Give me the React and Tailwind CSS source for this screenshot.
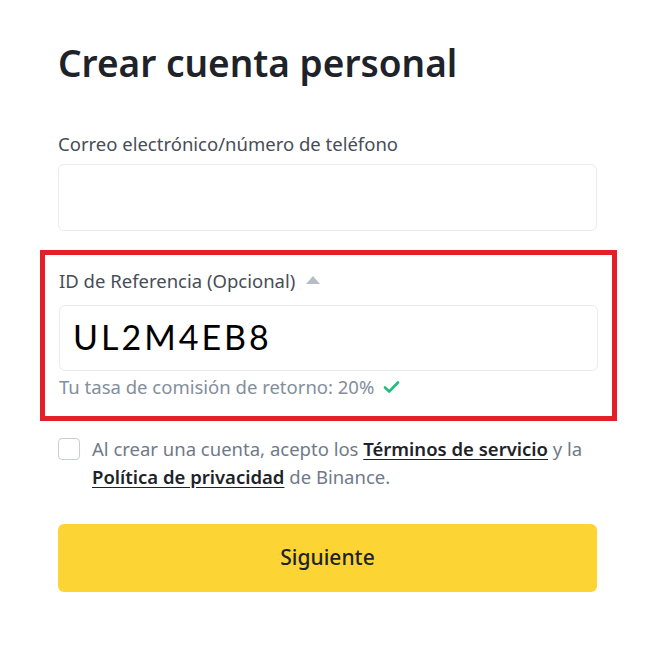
import React from "react";

function CheckIcon() {
  return (
    <svg width="17" height="14" viewBox="0 0 17 14" className="ml-[9px]">
      <path d="M2 7.5l4.2 4L15 2.5" fill="none" stroke="#1fbf7f" strokeWidth="2.6" strokeLinecap="round" strokeLinejoin="round" />
    </svg>
  );
}

export default function App() {
  return (
    <div className="w-[650px] h-[645px] bg-white overflow-hidden font-['Noto_Sans',Roboto,Arial,sans-serif]">
      <div className="pl-[58px] w-[597px]">
        <h1 className="mt-[39px] text-[37px] leading-[48px] font-semibold text-[#1e2329]">
          Crear cuenta personal
        </h1>

        <label className="block mt-[44px] text-[18.5px] leading-[26px] text-[#474d57]">
          Correo electrónico/número de teléfono
        </label>
        <div className="mt-[7px] h-[67px] rounded-[6px] border border-[#eaecef]" />
      </div>

      {/* Referral block (highlighted) */}
      <div className="ml-[40px] mt-[19px] w-[577px] border-[5px] border-[#e3202a] px-[14px] pt-[13px] pb-[16px]">
        <div className="flex items-center text-[18.5px] leading-[26px] text-[#474d57]">
          ID de Referencia (Opcional)
          <span className="ml-[11px] w-0 h-0 border-x-[7px] border-x-transparent border-b-[8px] border-b-[#b7bdc6] mb-[2px]" />
        </div>
        <div className="mt-[11px] h-[66px] rounded-[6px] border border-[#eaecef] flex items-center pl-[13px]">
          <span className="mb-[3px] text-[34px] leading-none tracking-[3px] text-black font-['Lato','Inter',sans-serif]">
            UL2M4EB8
          </span>
        </div>
        <div className="mt-[3px] flex items-center text-[18.5px] leading-[26px] text-[#848e9c]">
          Tu tasa de comisión de retorno: 20%
          <CheckIcon />
        </div>
      </div>

      <div className="pl-[58px] w-[597px]">
        <div className="mt-[14px] flex items-start gap-[12px]">
          <span className="mt-[3px] shrink-0 w-[22px] h-[22px] rounded-[4px] border-[1.5px] border-[#c9ced6]" />
          <p className="text-[18.5px] leading-[28px] text-[#707a8a]">
            Al crear una cuenta, acepto los{" "}
            <span className="font-semibold text-[#1e2329] underline underline-offset-[3px]">Términos de servicio</span>{" "}
            y la{" "}
            <span className="font-semibold text-[#1e2329] underline underline-offset-[3px]">Política de privacidad</span>{" "}
            de Binance.
          </p>
        </div>

        <button className="mt-[33px] w-full h-[68px] rounded-[6px] bg-[#fcd535] text-[21px] font-medium text-[#1e2329]">
          Siguiente
        </button>
      </div>
    </div>
  );
}
